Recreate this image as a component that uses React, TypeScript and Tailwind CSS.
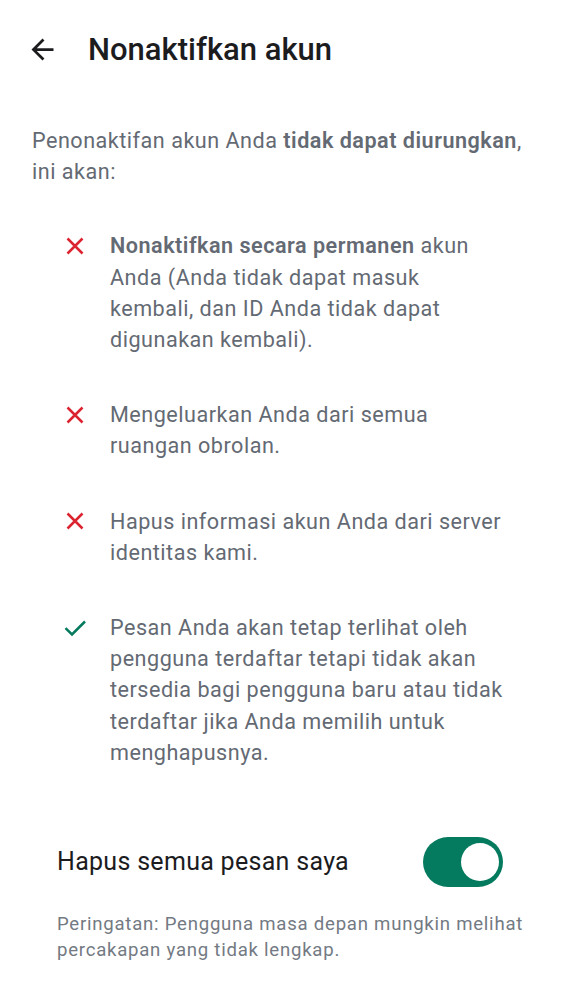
import React from "react";

const XIcon = () => (
  <svg width="26" height="26" viewBox="0 0 26 26" fill="none" stroke="#dc2430" strokeWidth="2.5">
    <path d="M5.5 5.5L20.5 20.5M20.5 5.5L5.5 20.5" />
  </svg>
);

const CheckIcon = () => (
  <svg width="26" height="26" viewBox="0 0 26 26" fill="none" stroke="#047a5e" strokeWidth="2.5">
    <path d="M3.5 13.2L10 19.5L23 6.5" />
  </svg>
);

function Item({ icon, children }: { icon: React.ReactNode; children: React.ReactNode }) {
  return (
    <div className="flex items-start">
      <div className="w-[26px] h-[31.2px] flex items-center justify-center shrink-0">{icon}</div>
      <p className="w-[394px] ml-[22px]">{children}</p>
    </div>
  );
}

export default function App() {
  return (
    <div
      className="w-[562px] h-[1000px] bg-white overflow-hidden"
      style={{ fontFamily: "Roboto, 'Noto Sans', sans-serif" }}
    >
      <div className="h-[98px] flex items-center">
        <div className="ml-[26px] w-[34px] flex items-center">
          <svg width="33" height="33" viewBox="0 0 24 24" fill="#1c1c1f">
            <path d="M20 11H7.83l5.59-5.59L12 4l-8 8 8 8 1.41-1.41L7.83 13H20v-2z" />
          </svg>
        </div>
        <h1 className="ml-[28px] text-[31px] font-medium text-[#1c1c1f] leading-none">Nonaktifkan akun</h1>
      </div>

      <div className="text-[21.6px] leading-[31.2px] tracking-[0.5px] text-[#646a73]">
        <p className="mt-[27px] pl-[32px] pr-[16px]">
          Penonaktifan akun Anda <span className="font-semibold">tidak dapat diurungkan</span>, ini akan:
        </p>

        <div className="mt-[43px] pl-[62px] flex flex-col gap-[44px]">
          <Item icon={<XIcon />}>
            <span className="font-semibold">Nonaktifkan secara permanen</span> akun Anda (Anda tidak dapat masuk kembali, dan ID Anda tidak dapat digunakan kembali).
          </Item>
          <Item icon={<XIcon />}>Mengeluarkan Anda dari semua ruangan obrolan.</Item>
          <Item icon={<XIcon />}>Hapus informasi akun Anda dari server identitas kami.</Item>
          <Item icon={<CheckIcon />}>
            Pesan Anda akan tetap terlihat oleh pengguna terdaftar tetapi tidak akan tersedia bagi pengguna baru atau tidak terdaftar jika Anda memilih untuk menghapusnya.
          </Item>
        </div>
      </div>

      <div className="mt-[69px] pl-[57px] pr-[59px] flex items-center justify-between">
        <span className="text-[25px] tracking-[0.3px] text-[#1c1c1f]">Hapus semua pesan saya</span>
        <div className="w-[80px] h-[50px] rounded-full bg-[#047a5e] flex items-center justify-end pr-[4px]">
          <div className="w-[38px] h-[38px] rounded-full bg-white" />
        </div>
      </div>

      <p className="mt-[24px] pl-[57px] pr-[20px] text-[18.6px] leading-[26px] tracking-[0.75px] text-[#737a83]">
        Peringatan: Pengguna masa depan mungkin melihat percakapan yang tidak lengkap.
      </p>
    </div>
  );
}
